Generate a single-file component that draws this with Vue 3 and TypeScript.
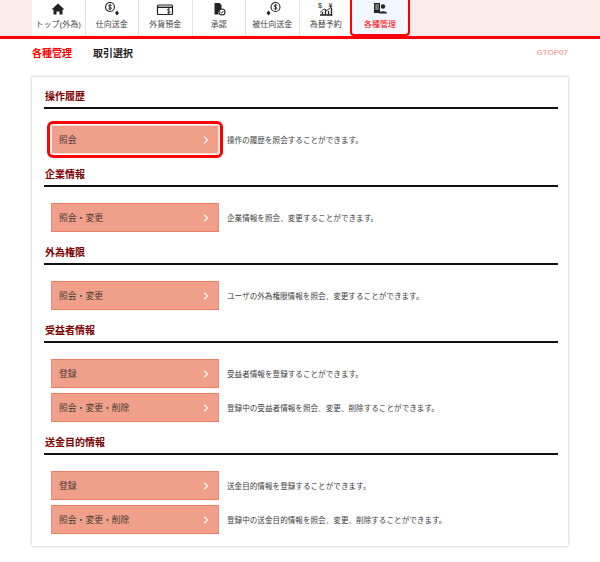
<script setup lang="ts">
interface Row { label: string; desc: string; focus?: boolean }
interface Section { title: string; rows: Row[] }
interface Tab { label: string; icon: string; active?: boolean }

const tabs: Tab[] = [
  { label: 'トップ(外為)', icon: 'home' },
  { label: '仕向送金', icon: 'out' },
  { label: '外貨預金', icon: 'dep' },
  { label: '承認', icon: 'app' },
  { label: '被仕向送金', icon: 'in' },
  { label: '為替予約', icon: 'fx' },
  { label: '各種管理', icon: 'adm', active: true },
]

const sections: Section[] = [
  { title: '操作履歴', rows: [{ label: '照会', desc: '操作の履歴を照会することができます。', focus: true }] },
  { title: '企業情報', rows: [{ label: '照会・変更', desc: '企業情報を照会、変更することができます。' }] },
  { title: '外為権限', rows: [{ label: '照会・変更', desc: 'ユーザの外為権限情報を照会、変更することができます。' }] },
  { title: '受益者情報', rows: [
    { label: '登録', desc: '受益者情報を登録することができます。' },
    { label: '照会・変更・削除', desc: '登録中の受益者情報を照会、変更、削除することができます。' },
  ] },
  { title: '送金目的情報', rows: [
    { label: '登録', desc: '送金目的情報を登録することができます。' },
    { label: '照会・変更・削除', desc: '登録中の送金目的情報を照会、変更、削除することができます。' },
  ] },
]
</script>

<template>
  <div class="page">
    <nav class="nav">
      <div v-for="t in tabs" :key="t.label" class="tab" :class="{ active: t.active }">
        <svg class="ico" viewBox="0 0 18 14" aria-hidden="true">
          <g v-if="t.icon === 'home'">
            <path d="M9 1.5 L2.5 7.5 H4.5 V12.5 H7.5 V9.5 H10.5 V12.5 H13.5 V7.5 H15.5 Z" fill="#222" />
          </g>
          <g v-else-if="t.icon === 'out'">
            <circle cx="7" cy="5" r="4.5" fill="none" stroke="#222" stroke-width="1.1" />
            <path d="M8.7 3.4 C7.8 2.6 5.5 2.8 5.6 4.2 C5.7 5.6 8.5 4.8 8.5 6.2 C8.5 7.5 6 7.5 5.2 6.6 M7 2 V8" fill="none" stroke="#222" stroke-width="0.9" />
            <path d="M14 8.6 L16 11 L14 13.4 L12 11 Z" fill="#222" />
          </g>
          <g v-else-if="t.icon === 'dep'">
            <rect x="1.5" y="3" width="15" height="9.5" rx="1" fill="none" stroke="#222" stroke-width="1.2" />
            <rect x="1.5" y="4.6" width="15" height="1.4" fill="#222" />
            <path d="M14 7.2 C13 6.6 11.4 6.8 11.4 8 C11.4 9.2 14.1 8.7 14.1 10 C14.1 11.1 12.2 11.2 11.2 10.5 M12.7 6.4 V12" fill="none" stroke="#222" stroke-width="0.8" />
          </g>
          <g v-else-if="t.icon === 'app'">
            <path d="M4.5 1 H9.5 L11.5 3 V7 A4 4 0 0 0 8.5 12.5 H4.5 Z" fill="#222" />
            <circle cx="12" cy="10" r="3" fill="none" stroke="#222" stroke-width="1.1" />
            <path d="M10.6 10 L11.8 11.1 L13.5 9" fill="none" stroke="#222" stroke-width="0.9" />
          </g>
          <g v-else-if="t.icon === 'in'">
            <circle cx="12.5" cy="5" r="4.5" fill="none" stroke="#222" stroke-width="1.1" />
            <path d="M14.2 3.4 C13.3 2.6 11 2.8 11.1 4.2 C11.2 5.6 14 4.8 14 6.2 C14 7.5 11.5 7.5 10.7 6.6 M12.5 2 V8" fill="none" stroke="#222" stroke-width="0.9" />
            <path d="M5.5 8.6 L7.5 11 L5.5 13.4 L3.5 11 Z" fill="#222" />
          </g>
          <g v-else-if="t.icon === 'fx'">
            <path d="M3 13 H15.5 M5.5 13 V10 M8.5 13 V8 M11.5 13 V9 M14.5 13 V6" fill="none" stroke="#222" stroke-width="1.3" />
            <path d="M3 10.5 L7 7 L10 8.5 L15 4.5" fill="none" stroke="#222" stroke-width="0.9" />
            <text x="1" y="6" font-size="7" font-family="Liberation Sans" fill="#222">$</text>
            <text x="11.5" y="6" font-size="7" font-family="Liberation Sans" fill="#222">¥</text>
          </g>
          <g v-else>
            <rect x="3" y="2" width="6" height="10" fill="#222" />
            <path d="M4.2 4 H7.8 M4.2 6 H7.8 M4.2 8 H7.8" stroke="#fff" stroke-width="0.8" />
            <circle cx="12" cy="5.5" r="2.2" fill="#222" />
            <path d="M8 12.5 C8 9.5 16 9.5 16 12.5 Z" fill="#222" />
          </g>
        </svg>
        <span class="tab-label">{{ t.label }}</span>
      </div>
    </nav>

    <header class="head">
      <div class="crumbs">
        <span class="crumb-cat">各種管理</span>
        <span class="crumb-page">取引選択</span>
      </div>
      <span class="code">GTOP07</span>
    </header>

    <main class="card">
      <section v-for="s in sections" :key="s.title" class="section">
        <h2 class="title">{{ s.title }}</h2>
        <div class="rows">
          <div v-for="r in s.rows" :key="r.desc" class="row">
            <button class="btn" :class="{ focus: r.focus }" type="button">
              <span>{{ r.label }}</span>
              <svg class="chev" viewBox="0 0 8 12" aria-hidden="true">
                <path d="M1.5 1.5 L6 6 L1.5 10.5" fill="none" stroke="#fff" stroke-width="1.6" />
              </svg>
            </button>
            <p class="desc">{{ r.desc }}</p>
          </div>
        </div>
      </section>
    </main>
  </div>
</template>

<style>
html, body { margin: 0; background: #fff; }
</style>

<style scoped>
.page {
  width: 600px;
  height: 562px;
  overflow: hidden;
  font-family: "Liberation Sans", "Noto Sans CJK JP", sans-serif;
  background: #fff;
}
.nav {
  height: 36px;
  padding-left: 32px;
  display: flex;
  background: #fbeaea;
  border-bottom: 3px solid #f00;
}
.tab {
  width: 53.5px;
  height: 36px;
  background: #fff;
  border-right: 1px solid #e4e4e4;
  box-sizing: border-box;
  flex: none;
  display: flex;
  flex-direction: column;
  align-items: center;
  padding-top: 2px;
}
.ico { width: 18px; height: 14px; flex: none; }
.tab-label {
  margin-top: 3px;
  font-size: 8px;
  line-height: 11px;
  color: #444;
  white-space: nowrap;
}
.tab.active {
  width: 60px;
  height: 36px;
  margin-left: -3px;
  background: #f1f6ff;
  border: 2px solid #f00;
  border-top: 0;
  border-radius: 0 0 4px 4px;
  padding-top: 1px;
}
.tab.active .tab-label { color: #f00; margin-top: 4px; }
.head {
  display: flex;
  justify-content: space-between;
  align-items: center;
  height: 27px;
  padding: 0 32px;
}
.crumbs { display: flex; gap: 21px; }
.crumb-cat { font-size: 10px; font-weight: 700; color: #f00; }
.crumb-page { font-size: 10px; font-weight: 700; color: #222; }
.code { font-size: 8px; color: #f08f78; }
.card {
  margin: 11px 32px 0;
  height: 469px;
  box-sizing: border-box;
  padding: 11px 10px 0 12px;
  background: #fff;
  box-shadow: 0 0 3px rgba(0, 0, 0, 0.28);
}
.section { margin-bottom: 12px; }
.title {
  margin: 0;
  box-sizing: content-box;
  height: 17px;
  padding: 2px 0 0 1px;
  font-size: 10px;
  line-height: 14px;
  font-weight: 700;
  color: #7d0000;
  border-bottom: 2px solid #111;
}
.rows {
  padding: 16px 0 0 7px;
  display: flex;
  flex-direction: column;
  gap: 5px;
}
.row { display: flex; align-items: center; gap: 8px; }
.btn {
  width: 168px;
  height: 29px;
  padding: 0 9px 0 7px;
  display: flex;
  align-items: center;
  justify-content: space-between;
  background: #f09f8b;
  border: 1px solid #ee8d78;
  border-top-color: #ec7e66;
  border-bottom-color: #ec7e66;
  color: #4a3a36;
  font-family: inherit;
  font-size: 8.8px;
  box-sizing: border-box;
}
.btn.focus {
  outline: 3px solid #f00;
  outline-offset: 1px;
  border-color: #fbdcd4;
  border-radius: 2px;
}
.chev { width: 6px; height: 10px; }
.desc {
  margin: 0;
  font-size: 7.6px;
  color: #3c3c3c;
  white-space: nowrap;
}
</style>
